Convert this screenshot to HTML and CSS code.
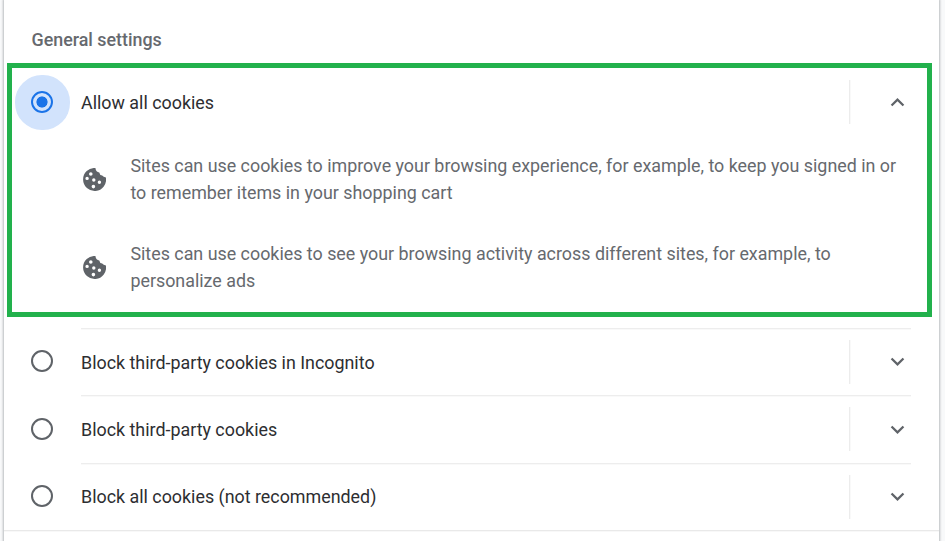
FILE: index.html
```html
<!DOCTYPE html>
<html lang="en">
<head>
<meta charset="utf-8">
<title>Cookies</title>
<link rel="stylesheet" href="styles.css">
</head>
<body>
<svg class="defs" aria-hidden="true">
  <symbol id="cookie" viewBox="0 0 23 23">
    <path fill-rule="evenodd" d="M12.4 0A11.5 11.5 0 1 0 22.9 9.4Q20.4 9.2 19.2 7.6Q16.7 7.3 16.3 4.4Q13 4.4 12.4 0ZM6 6a1.8 1.8 0 1 0 3.6 0a1.8 1.8 0 1 0-3.6 0ZM2.4 10.4a1.7 1.7 0 1 0 3.4 0a1.7 1.7 0 1 0-3.4 0ZM9.1 12a1.7 1.7 0 1 0 3.4 0a1.7 1.7 0 1 0-3.4 0ZM14.7 14.3a1.7 1.7 0 1 0 3.4 0a1.7 1.7 0 1 0-3.4 0ZM8.6 18.6a1.8 1.8 0 1 0 3.6 0a1.8 1.8 0 1 0-3.6 0Z"/>
  </symbol>
  <symbol id="down" viewBox="0 0 24 24"><path d="M16.59 8.59 12 13.17 7.41 8.59 6 10l6 6 6-6z"/></symbol>
  <symbol id="up" viewBox="0 0 24 24"><path d="M12 8l-6 6 1.41 1.41L12 10.83l4.59 4.58L18 14z"/></symbol>
</svg>
<main class="card">
  <h2 class="heading">General settings</h2>
  <section class="option">
    <div class="row first">
      <span class="radio checked"></span>
      <span class="label">Allow all cookies</span>
      <span class="toggle"><svg><use href="#up"/></svg></span>
    </div>
    <div class="details">
      <div class="detail"><svg><use href="#cookie"/></svg><p>Sites can use cookies to improve your browsing experience, for example, to keep you signed in or<br>to remember items in your shopping cart</p></div>
      <div class="detail"><svg><use href="#cookie"/></svg><p>Sites can use cookies to see your browsing activity across different sites, for example, to<br>personalize ads</p></div>
    </div>
    <div class="highlight"></div>
  </section>
  <div class="row">
    <span class="radio"></span>
    <span class="label">Block third-party cookies in Incognito</span>
    <span class="toggle"><svg><use href="#down"/></svg></span>
  </div>
  <div class="row tall">
    <span class="radio"></span>
    <span class="label">Block third-party cookies</span>
    <span class="toggle"><svg><use href="#down"/></svg></span>
  </div>
  <div class="row last">
    <span class="radio"></span>
    <span class="label">Block all cookies (not recommended)</span>
    <span class="toggle"><svg><use href="#down"/></svg></span>
  </div>
  <div class="end"></div>
</main>
</body>
</html>
```
FILE: styles.css
```css
* { box-sizing: border-box; }
body {
  margin: 0;
  height: 541px;
  overflow: hidden;
  background: #f8f9fa;
  font: 17.875px/27px Roboto, sans-serif;
  color: #2d2e31;
}
.defs { position: absolute; width: 0; height: 0; }
.card {
  width: 935px;
  height: 560px;
  margin-left: 4px;
  background: #fff;
  box-shadow: 0 0 2px 1px rgba(60, 64, 67, .32);
}
.heading {
  margin: 0;
  height: 68px;
  padding: 26px 0 0 27.5px;
  font-size: 17.875px;
  font-weight: 500;
  line-height: 27px;
  color: #66696e;
}
.option { position: relative; height: 260px; }
.highlight {
  position: absolute;
  left: 3px;
  top: -5px;
  width: 925px;
  height: 254px;
  border: 5px solid #22b14c;
}
.row {
  display: grid;
  grid-template-columns: 50px 768px 62px;
  align-items: center;
  height: 67px;
  padding-left: 27px;
  background: linear-gradient(#ededed, #ededed) 77px 0 / 830px 1px no-repeat,
    linear-gradient(#f9f9f9, #f9f9f9) 77px 1px / 830px 1px no-repeat;
}
.row.first { height: 68px; background: none; }
.row.tall { height: 68px; }
.label { padding-top: 2px; }
.row.first .label { padding-top: 1px; }
.row.tall .label, .row.last .label { padding-top: 0; }
.radio {
  width: 22px;
  height: 22px;
  margin-bottom: 1px;
  border: 2px solid #5f6368;
  border-radius: 50%;
}
.row.first .radio, .row.tall .radio { margin-bottom: 0; }
.radio.checked {
  border-color: #1a73e8;
  background: radial-gradient(circle, #1a73e8 5.2px, #d2e3fc 5.9px);
  background-origin: border-box;
  box-shadow: .5px .5px 0 16.5px #d2e3fc;
}
.toggle {
  display: flex;
  align-items: center;
  justify-content: flex-end;
  height: 44px;
  border-left: 1px solid #ececec;
  box-shadow: inset 1px 0 #f9f9f9;
}
.toggle svg { width: 27px; height: 27px; fill: #5f6368; }
.details { padding: 16px 0 0 79px; }
.detail {
  display: flex;
  align-items: center;
  gap: 24.4px;
  height: 54px;
  margin-bottom: 34px;
  color: #66696e;
}
.detail svg { width: 23px; height: 23px; fill: #5f6368; }
.detail p { margin: 0; white-space: nowrap; }
.end { height: 2px; border-top: 1px solid #e9e9e9; border-bottom: 1px solid #f8f8f8; }
```
